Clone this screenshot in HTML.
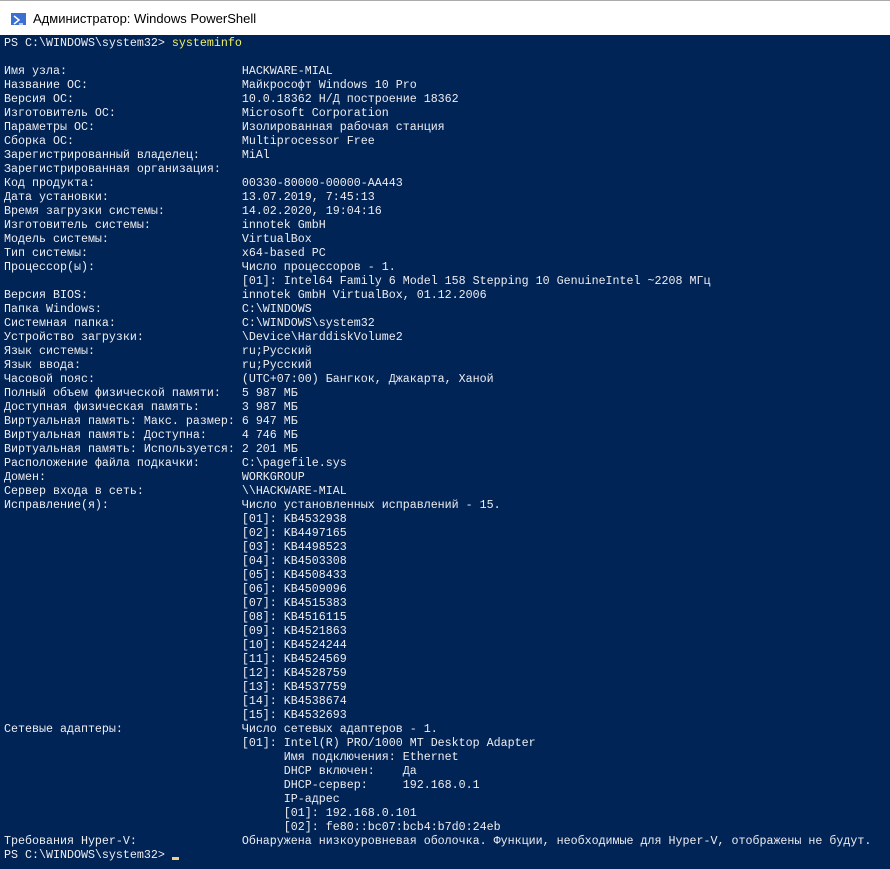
<!DOCTYPE html>
<html><head><meta charset="utf-8"><style>
html,body{margin:0;padding:0;width:890px;height:869px;overflow:hidden;background:#012456}
.title{position:absolute;left:0;top:0;width:890px;height:35px;background:#fff;border-top:1px solid #aaa;box-sizing:border-box}
.title span{position:absolute;left:33px;top:10px;font:13px "Liberation Sans",sans-serif;color:#000}
.icon{position:absolute;left:11px;top:12px;width:15px;height:12px;background:#3b6fd1}
.con{position:absolute;left:4px;top:36px;margin:0;font:11.67px/14px "Liberation Mono","DejaVu Sans Mono",monospace;color:#eeedf0;white-space:pre}
.y{color:#f2f060}
.cur{display:inline-block;width:7px;height:3px;background:#f2d08c;vertical-align:-2px}
</style></head><body>
<div class="title"><div class="icon"><svg width="15" height="12"><path d="M3 2 L8 6 L3 10" stroke="#fff" stroke-width="1.5" fill="none"/><path d="M8 10 H12" stroke="#fff" stroke-width="1.3"/></svg></div><span>Администратор: Windows PowerShell</span></div>
<pre class="con">PS C:\WINDOWS\system32&gt; <span class="y">systeminfo</span>

Имя узла:                         HACKWARE-MIAL
Название ОС:                      Майкрософт Windows 10 Pro
Версия ОС:                        10.0.18362 Н/Д построение 18362
Изготовитель ОС:                  Microsoft Corporation
Параметры ОС:                     Изолированная рабочая станция
Сборка ОС:                        Multiprocessor Free
Зарегистрированный владелец:      MiAl
Зарегистрированная организация:
Код продукта:                     00330-80000-00000-AA443
Дата установки:                   13.07.2019, 7:45:13
Время загрузки системы:           14.02.2020, 19:04:16
Изготовитель системы:             innotek GmbH
Модель системы:                   VirtualBox
Тип системы:                      x64-based PC
Процессор(ы):                     Число процессоров - 1.
                                  [01]: Intel64 Family 6 Model 158 Stepping 10 GenuineIntel ~2208 МГц
Версия BIOS:                      innotek GmbH VirtualBox, 01.12.2006
Папка Windows:                    C:\WINDOWS
Системная папка:                  C:\WINDOWS\system32
Устройство загрузки:              \Device\HarddiskVolume2
Язык системы:                     ru;Русский
Язык ввода:                       ru;Русский
Часовой пояс:                     (UTC+07:00) Бангкок, Джакарта, Ханой
Полный объем физической памяти:   5 987 МБ
Доступная физическая память:      3 987 МБ
Виртуальная память: Макс. размер: 6 947 МБ
Виртуальная память: Доступна:     4 746 МБ
Виртуальная память: Используется: 2 201 МБ
Расположение файла подкачки:      C:\pagefile.sys
Домен:                            WORKGROUP
Сервер входа в сеть:              \\HACKWARE-MIAL
Исправление(я):                   Число установленных исправлений - 15.
                                  [01]: KB4532938
                                  [02]: KB4497165
                                  [03]: KB4498523
                                  [04]: KB4503308
                                  [05]: KB4508433
                                  [06]: KB4509096
                                  [07]: KB4515383
                                  [08]: KB4516115
                                  [09]: KB4521863
                                  [10]: KB4524244
                                  [11]: KB4524569
                                  [12]: KB4528759
                                  [13]: KB4537759
                                  [14]: KB4538674
                                  [15]: KB4532693
Сетевые адаптеры:                 Число сетевых адаптеров - 1.
                                  [01]: Intel(R) PRO/1000 MT Desktop Adapter
                                        Имя подключения: Ethernet
                                        DHCP включен:    Да
                                        DHCP-сервер:     192.168.0.1
                                        IP-адрес
                                        [01]: 192.168.0.101
                                        [02]: fe80::bc07:bcb4:b7d0:24eb
Требования Hyper-V:               Обнаружена низкоуровневая оболочка. Функции, необходимые для Hyper-V, отображены не будут.
PS C:\WINDOWS\system32&gt; <span class="cur"></span></pre>
</body></html>
